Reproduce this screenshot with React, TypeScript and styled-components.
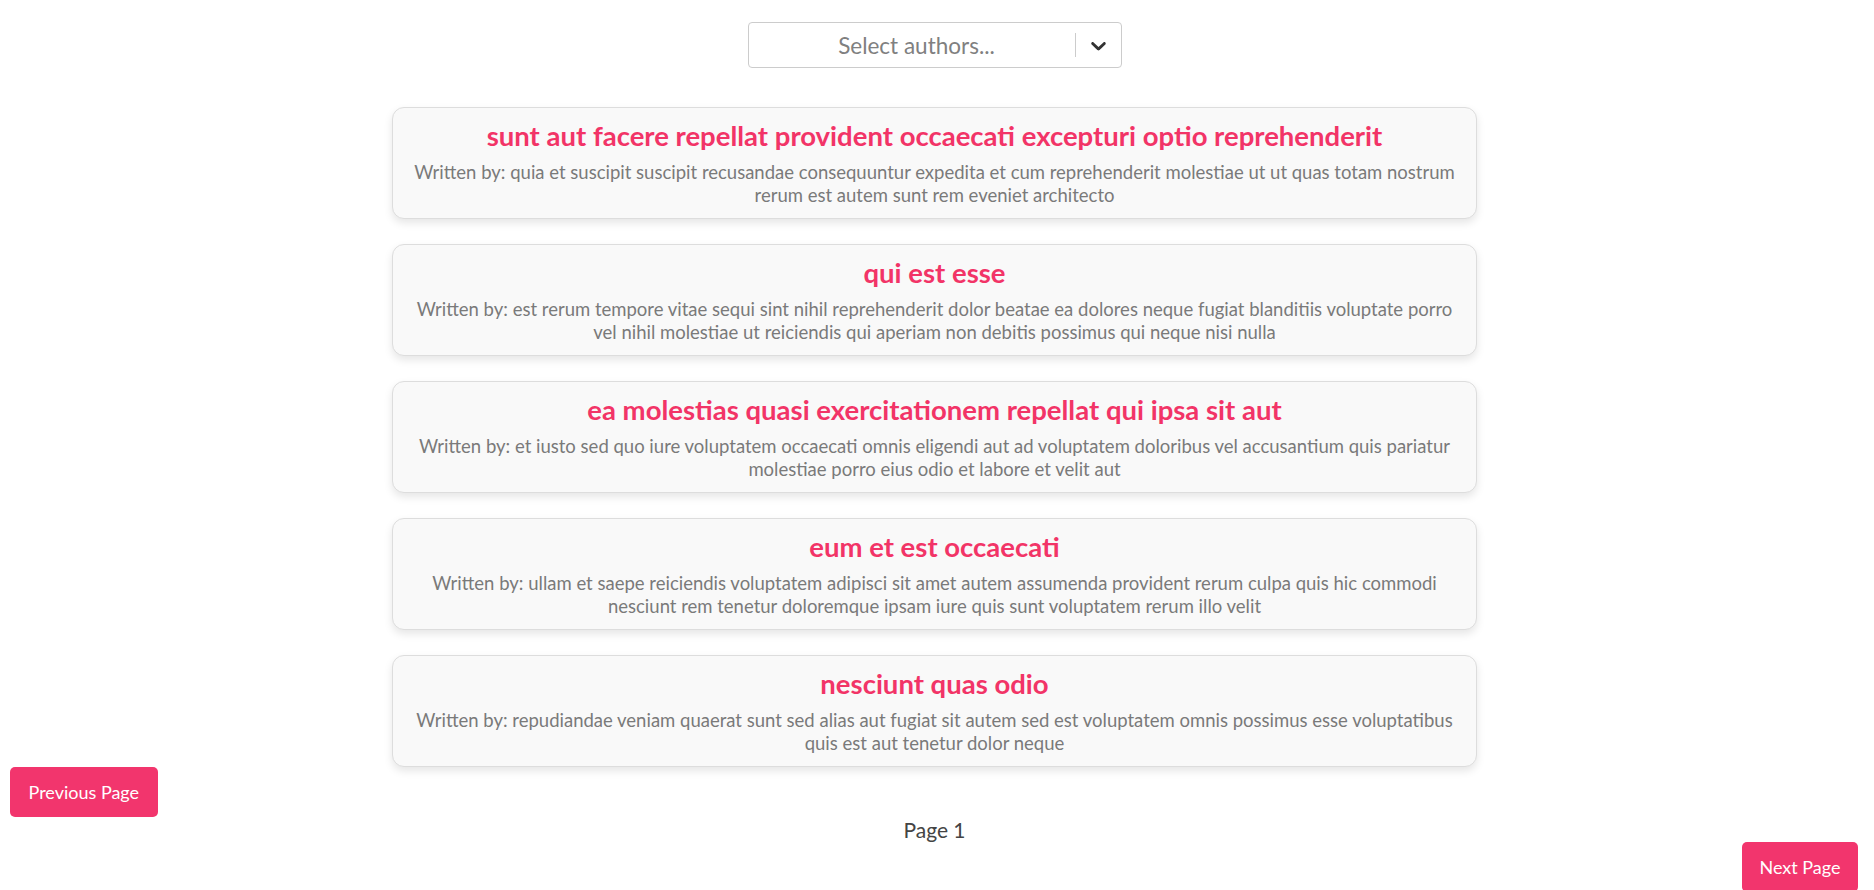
import React from "react";
import styled, { createGlobalStyle } from "styled-components";

const GlobalStyle = createGlobalStyle`
  html, body {
    margin: 0;
    padding: 0;
    background: #ffffff;
    overflow: hidden;
  }
  body {
    font-family: "Lato", "Open Sans", sans-serif;
  }
  * { box-sizing: border-box; }
`;

const Page = styled.div`
  width: 1874px;
  height: 890px;
  display: flex;
  flex-direction: column;
  padding-top: 22px;
`;

const Center = styled.div`
  display: flex;
  flex-direction: column;
  align-items: center;
  padding-right: 5px;
`;

const SelectBox = styled.div`
  width: 374px;
  height: 46px;
  border: 1px solid #cccccc;
  border-radius: 4px;
  display: flex;
  align-items: stretch;
  background: #fff;
`;

const SelectValue = styled.div`
  flex: 1;
  display: flex;
  align-items: center;
  justify-content: center;
  padding-left: 10px;
  color: #808080;
  font-size: 22.5px;
`;

const Separator = styled.span`
  width: 1px;
  background: #cccccc;
  margin: 10px 0 10px;
`;

const Indicator = styled.div`
  width: 45px;
  display: flex;
  align-items: center;
  justify-content: center;
  color: #333333;
`;

const List = styled.div`
  margin-top: 39px;
  display: flex;
  flex-direction: column;
  gap: 25px;
`;

const Card = styled.div`
  width: 1085px;
  height: 112px;
  background: #f9f9f9;
  border: 1px solid #dddddd;
  border-radius: 12px;
  box-shadow: 0 4px 8px rgba(0, 0, 0, 0.1);
  padding: 13px 18px 0;
  text-align: center;
`;

const Title = styled.h2`
  margin: 0 0 10px;
  font-size: 27.5px;
  line-height: 30px;
  font-weight: 700;
  color: #f23467;
`;

const Author = styled.p`
  margin: 0;
  font-size: 18.5px;
  line-height: 22.5px;
  color: #7a7a7a;
`;

const Footer = styled.div`
  display: flex;
  flex-direction: column;
`;

const PageButton = styled.button<{ $side: "left" | "right" }>`
  align-self: ${(p) => (p.$side === "left" ? "flex-start" : "flex-end")};
  margin: ${(p) => (p.$side === "left" ? "0 0 0 10px" : "0 16px 0 0")};
  height: 50px;
  padding: ${(p) => (p.$side === "left" ? "0 18.5px" : "0 17.5px")};
  border: none;
  border-radius: 5px;
  background: #f2356d;
  color: #ffffff;
  font-family: "Lato", "Open Sans", sans-serif;
  font-size: 18px;
  cursor: pointer;
`;

const PageLabel = styled.p`
  margin: 0;
  padding-right: 5px;
  text-align: center;
  font-size: 21px;
  line-height: 25px;
  color: #444444;
`;

const posts = [
  {
    title: "sunt aut facere repellat provident occaecati excepturi optio reprehenderit",
    body: "quia et suscipit suscipit recusandae consequuntur expedita et cum reprehenderit molestiae ut ut quas totam nostrum rerum est autem sunt rem eveniet architecto",
  },
  {
    title: "qui est esse",
    body: "est rerum tempore vitae sequi sint nihil reprehenderit dolor beatae ea dolores neque fugiat blanditiis voluptate porro vel nihil molestiae ut reiciendis qui aperiam non debitis possimus qui neque nisi nulla",
  },
  {
    title: "ea molestias quasi exercitationem repellat qui ipsa sit aut",
    body: "et iusto sed quo iure voluptatem occaecati omnis eligendi aut ad voluptatem doloribus vel accusantium quis pariatur molestiae porro eius odio et labore et velit aut",
  },
  {
    title: "eum et est occaecati",
    body: "ullam et saepe reiciendis voluptatem adipisci sit amet autem assumenda provident rerum culpa quis hic commodi nesciunt rem tenetur doloremque ipsam iure quis sunt voluptatem rerum illo velit",
  },
  {
    title: "nesciunt quas odio",
    body: "repudiandae veniam quaerat sunt sed alias aut fugiat sit autem sed est voluptatem omnis possimus esse voluptatibus quis est aut tenetur dolor neque",
  },
];

const Chevron = () => (
  <svg width="25" height="25" viewBox="0 0 20 20" fill="currentColor" aria-hidden="true">
    <path d="M4.516 7.548c0.436-0.446 1.043-0.481 1.576 0l3.908 3.747 3.908-3.747c0.533-0.481 1.141-0.446 1.574 0 0.436 0.445 0.408 1.197 0 1.615-0.406 0.418-4.695 4.502-4.695 4.502-0.217 0.223-0.502 0.335-0.787 0.335s-0.57-0.112-0.789-0.335c0 0-4.287-4.084-4.695-4.502s-0.436-1.170 0-1.615z" />
  </svg>
);

export default function App() {
  return (
    <>
      <GlobalStyle />
      <Page>
        <Center>
          <SelectBox>
            <SelectValue>Select authors...</SelectValue>
            <Separator />
            <Indicator>
              <Chevron />
            </Indicator>
          </SelectBox>
          <List>
            {posts.map((p) => (
              <Card key={p.title}>
                <Title>{p.title}</Title>
                <Author>Written by: {p.body}</Author>
              </Card>
            ))}
          </List>
        </Center>
        <Footer>
          <PageButton $side="left">Previous Page</PageButton>
          <PageLabel>Page 1</PageLabel>
          <PageButton $side="right">Next Page</PageButton>
        </Footer>
      </Page>
    </>
  );
}
